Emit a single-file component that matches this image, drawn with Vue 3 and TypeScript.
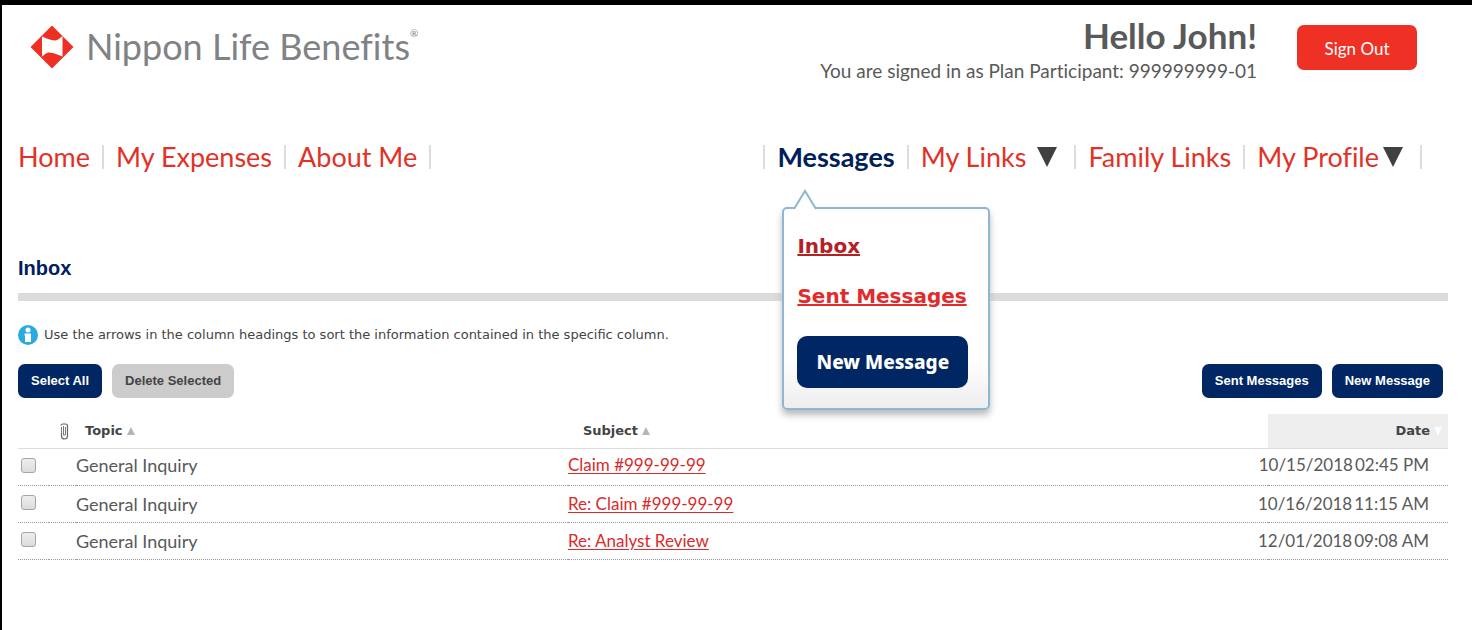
<script setup lang="ts">
import { ref } from 'vue'

interface Message {
  id: number
  topic: string
  subject: string
  date: string
  time: string
}

const messages: Message[] = [
  { id: 1, topic: 'General Inquiry', subject: 'Claim #999-99-99', date: '10/15/2018', time: '02:45 PM' },
  { id: 2, topic: 'General Inquiry', subject: 'Re: Claim #999-99-99', date: '10/16/2018', time: '11:15 AM' },
  { id: 3, topic: 'General Inquiry', subject: 'Re: Analyst Review', date: '12/01/2018', time: '09:08 AM' },
]

const selected = ref<number[]>([])

function selectAll(): void {
  selected.value = messages.map((m) => m.id)
}
</script>

<template>
  <div class="page">
    <header class="header">
      <a class="brand" href="#" aria-label="Nippon Life Benefits">
        <svg class="brand-mark" viewBox="0 0 44 44" aria-hidden="true">
          <path d="M22 0.5 43.5 22 22 43.5 0.5 22Z" fill="#ee3024" />
          <path d="M12 11.500C16 13 20 15.500 25 15.500C28 15.500 30 13 32.500 11V31.500C28 30 24 27.500 19.500 27.500C16 27.500 14.500 30 12 31.500Z" fill="#fff" />
        </svg>
        <span class="brand-name">Nippon Life Benefits</span>
        <span class="brand-reg">®</span>
      </a>
      <div class="account">
        <div class="greeting">
          <p class="hello">Hello John!</p>
          <p class="signed">You are signed in as Plan Participant: 999999999-01</p>
        </div>
        <button class="sign-out" type="button">Sign Out</button>
      </div>
    </header>

    <nav class="nav" aria-label="Main">
      <ul class="nav-group">
        <li><a href="#">Home</a></li>
        <li><a href="#">My Expenses</a></li>
        <li><a href="#">About Me</a></li>
      </ul>
      <ul class="nav-group nav-right">
        <li>
          <a class="current" href="#">Messages</a>
          <div class="menu">
            <svg class="menu-tip" viewBox="0 0 24 21" aria-hidden="true">
              <path d="M1 20 12 2 23 20" fill="#fff" stroke="#8fb6d2" stroke-width="2" />
            </svg>
            <a class="menu-link visited" href="#">Inbox</a>
            <a class="menu-link" href="#">Sent Messages</a>
            <button class="menu-button" type="button">New Message</button>
          </div>
        </li>
        <li>
          <a class="with-arrow spaced" href="#">My Links
            <svg class="arrow" viewBox="0 0 20 20" aria-hidden="true"><path d="M0 0H20L10 20Z" fill="#404040" /></svg>
          </a>
        </li>
        <li><a href="#">Family Links</a></li>
        <li>
          <a class="with-arrow" href="#">My Profile
            <svg class="arrow" viewBox="0 0 20 20" aria-hidden="true"><path d="M0 0H20L10 20Z" fill="#404040" /></svg>
          </a>
        </li>
      </ul>
    </nav>

    <main>
      <h1 class="title">Inbox</h1>
      <p class="hint">
        <svg class="info" viewBox="0 0 20 20" aria-hidden="true">
          <circle cx="10" cy="10" r="10" fill="#29abe2" />
          <circle cx="10" cy="5" r="2.500" fill="#fff" />
          <path d="M6.500 8.500H13V17H7V10.500H6.500Z" fill="#fff" />
        </svg>
        <span>Use the arrows in the column headings to sort the information contained in the specific column.</span>
      </p>

      <div class="toolbar">
        <button class="btn navy" type="button" @click="selectAll">Select All</button>
        <button class="btn grey" type="button">Delete Selected</button>
        <button class="btn navy push" type="button">Sent Messages</button>
        <button class="btn navy" type="button">New Message</button>
      </div>

      <table class="list">
        <colgroup>
          <col class="c-check" />
          <col class="c-clip" />
          <col class="c-topic" />
          <col />
          <col class="c-date" />
        </colgroup>
        <thead>
          <tr>
            <th></th>
            <th>
              <svg class="clip" viewBox="0 0 10 17" role="img" aria-label="Attachment">
                <path d="M2 2.500Q2 1 4 1H6.500Q8.500 1 8.500 3V13Q8.500 16 5.500 16T2.500 13V10" fill="none" stroke="#666" stroke-width="1.200" />
                <path d="M2.500 10V4M4.500 3V12H6.500V4" fill="none" stroke="#777" stroke-width="1" />
              </svg>
            </th>
            <th class="h-topic">Topic<svg class="sort" viewBox="0 0 8 8" aria-hidden="true"><path d="M4 0 8 8H0Z" fill="#b5b5b5" /></svg></th>
            <th class="h-subject">Subject<svg class="sort" viewBox="0 0 8 8" aria-hidden="true"><path d="M4 0 8 8H0Z" fill="#b5b5b5" /></svg></th>
            <th class="h-date">Date<svg class="sort" viewBox="0 0 8 8" aria-hidden="true"><path d="M0 0H8L4 8Z" fill="#fff" /></svg></th>
          </tr>
        </thead>
        <tbody>
          <tr v-for="m in messages" :key="m.id">
            <td class="check">
              <input v-model="selected" type="checkbox" :value="m.id" :aria-label="'Select ' + m.subject" />
            </td>
            <td></td>
            <td class="topic">{{ m.topic }}</td>
            <td><a href="#">{{ m.subject }}</a></td>
            <td><div class="when"><span>{{ m.date }}</span><span>{{ m.time }}</span></div></td>
          </tr>
        </tbody>
      </table>
    </main>
  </div>
</template>

<style>
body {
  margin: 0;
  background: #fff;
}
</style>

<style scoped>
.page {
  box-sizing: border-box;
  min-height: 100vh;
  border-top: 5px solid #000;
  border-left: 2px solid #000;
  padding: 0 24px 0 16px;
  color: #595959;
  font-family: Lato, "Open Sans", sans-serif;
  font-variant-ligatures: none;
}
p, h1, ul {
  margin: 0;
  padding: 0;
}
button {
  border: 0;
  cursor: pointer;
}
.header {
  display: flex;
  justify-content: space-between;
  height: 124px;
  padding: 0 31px 0 12px;
}
.brand {
  display: flex;
  align-items: flex-start;
  padding-top: 20px;
  color: #808285;
  text-decoration: none;
}
.brand-mark {
  width: 44px;
  height: 44px;
}
.brand-name {
  margin-left: 12px;
  font-size: 36px;
  line-height: 42px;
  white-space: nowrap;
}
.brand-reg {
  font-size: 10px;
  line-height: 16px;
}
.account {
  display: flex;
  align-items: flex-start;
  gap: 40px;
}
.greeting {
  padding-top: 9px;
  text-align: right;
  white-space: nowrap;
}
.hello {
  font-size: 35px;
  font-weight: 700;
  line-height: 42px;
}
.signed {
  font-size: 19px;
  line-height: 30px;
}
.sign-out {
  width: 120px;
  height: 45px;
  margin-top: 20px;
  padding-top: 3px;
  border-radius: 7px;
  background: #ee3124;
  color: #fff;
  font: 17px Lato, sans-serif;
}
.nav {
  display: flex;
  justify-content: space-between;
  padding-right: 26px;
}
.nav-group {
  display: flex;
  list-style: none;
}
.nav-group li {
  display: flex;
  align-items: center;
  position: relative;
  height: 56px;
  font-size: 27px;
  line-height: 32px;
  white-space: nowrap;
}
.nav-group li::after {
  width: 2px;
  height: 24px;
  margin: 0 12px;
  background: #dcdcdc;
  content: "";
}
.nav-group li:last-child::after {
  margin-right: 0;
}
.nav-right::before {
  width: 2px;
  height: 24px;
  margin: 16px 12px 0 0;
  background: #dcdcdc;
  content: "";
}
.nav-group a {
  color: #e23227;
  text-decoration: none;
}
.nav-group a.current {
  color: #00205b;
  font-weight: 700;
}
.with-arrow {
  display: flex;
  align-items: center;
  gap: 4px;
  padding-right: 5px;
}
.with-arrow.spaced {
  gap: 11px;
}
.arrow {
  width: 20px;
  height: 20px;
}
.menu {
  box-sizing: border-box;
  display: flex;
  flex-direction: column;
  align-items: flex-start;
  position: absolute;
  top: 78px;
  left: 5px;
  z-index: 2;
  width: 208px;
  padding: 24px 13px 20px;
  border: 2px solid #8fb6d2;
  border-radius: 5px;
  background: linear-gradient(#fff 75%, #eee);
  box-shadow: 0 5px 7px #bbb;
}
.menu-tip {
  position: absolute;
  top: -20px;
  left: 9px;
  width: 24px;
  height: 21px;
}
.nav-group .menu-link {
  margin-bottom: 24px;
  color: #e22b2b;
  font: 700 20px/26px "DejaVu Sans", sans-serif;
  text-decoration: underline;
}
.nav-group .menu-link.visited {
  color: #b52025;
}
.menu-button {
  width: 171px;
  height: 52px;
  margin-top: 3px;
  border-radius: 10px;
  background: #002663;
  color: #fff;
  font: 800 19px "Noto Sans", sans-serif;
}
.title {
  padding: 68px 0 10px;
  border-bottom: 8px solid #dcdcdc;
  color: #00205b;
  font: 700 20px/30px "Liberation Sans", Arial, sans-serif;
}
.hint {
  display: flex;
  align-items: center;
  gap: 6px;
  margin-top: 24px;
  color: #444;
  font: 13px/20px "DejaVu Sans", sans-serif;
}
.info {
  flex: none;
  width: 20px;
  height: 20px;
}
.toolbar {
  display: flex;
  gap: 10px;
  margin-top: 19px;
  padding-right: 5px;
}
.btn {
  height: 34px;
  padding: 0 13px 1px;
  border-radius: 7px;
  font: 700 13px "Liberation Sans", Arial, sans-serif;
}
.btn.navy {
  background: #002663;
  color: #fff;
}
.btn.grey {
  background: #ccc;
  color: #444;
}
.push {
  margin-left: auto;
}
.list {
  width: 100%;
  margin-top: 16px;
  border-collapse: collapse;
  table-layout: fixed;
}
.c-check {
  width: 31px;
}
.c-clip {
  width: 27px;
}
.c-topic {
  width: 34.4%;
}
.c-date {
  width: 180px;
}
th {
  height: 34px;
  padding: 0;
  border-bottom: 1px solid #ddd;
  color: #444;
  font: 700 13px/30px "DejaVu Sans", sans-serif;
  text-align: left;
}
.h-topic {
  padding-left: 9px;
}
.h-subject {
  padding-left: 15px;
}
.h-date {
  padding-right: 6px;
  background: #eee;
  text-align: right;
}
.sort {
  width: 8px;
  height: 8px;
  margin-left: 4px;
}
.clip {
  display: block;
  width: 10px;
  height: 17px;
  margin-left: 10px;
}
td {
  box-sizing: border-box;
  height: 37px;
  padding: 0;
  border-bottom: 1px dotted #999;
  font-size: 17px;
  line-height: 24px;
  white-space: nowrap;
}
tbody tr:first-child td {
  padding-bottom: 4px;
}
td.topic {
  font-size: 18px;
}
td a {
  color: #d92b2b;
  text-underline-offset: 2px;
}
tbody tr td.check {
  padding-bottom: 4px;
}
.check input {
  display: block;
  appearance: none;
  width: 15px;
  height: 15px;
  margin: 0 0 0 3px;
  border: 1px solid #a5a5a5;
  border-radius: 3px;
  background: linear-gradient(#eee, #dcdcdc);
}
.check input:checked {
  background: #002663;
}
.when {
  display: flex;
  justify-content: flex-end;
  gap: 2px;
  padding-right: 19px;
}
</style>
